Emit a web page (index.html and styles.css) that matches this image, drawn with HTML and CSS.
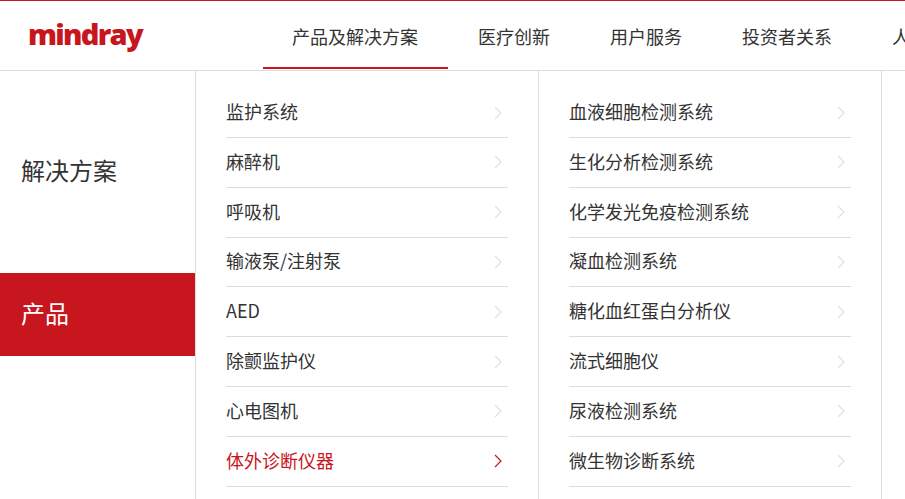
FILE: index.html
```html
<!DOCTYPE html>
<html lang="zh-CN">
<head>
<meta charset="utf-8">
<title>Mindray</title>
<link rel="stylesheet" href="styles.css">
</head>
<body>
<header class="header">
  <a class="logo">mindray</a>
  <nav class="nav">
    <a class="nav-item active">产品及解决方案</a>
    <a class="nav-item">医疗创新</a>
    <a class="nav-item">用户服务</a>
    <a class="nav-item">投资者关系</a>
    <a class="nav-item">人才招聘</a>
  </nav>
</header>
<main class="menu">
  <aside class="side">
    <div class="side-item">解决方案</div>
    <div class="side-item current">产品</div>
  </aside>
  <ul class="col">
    <li class="row"><span>监护系统</span><svg class="chev" viewBox="0 0 8 14"><path d="M1 1l6 6-6 6"/></svg></li>
    <li class="row"><span>麻醉机</span><svg class="chev" viewBox="0 0 8 14"><path d="M1 1l6 6-6 6"/></svg></li>
    <li class="row"><span>呼吸机</span><svg class="chev" viewBox="0 0 8 14"><path d="M1 1l6 6-6 6"/></svg></li>
    <li class="row"><span>输液泵/注射泵</span><svg class="chev" viewBox="0 0 8 14"><path d="M1 1l6 6-6 6"/></svg></li>
    <li class="row"><span>AED</span><svg class="chev" viewBox="0 0 8 14"><path d="M1 1l6 6-6 6"/></svg></li>
    <li class="row"><span>除颤监护仪</span><svg class="chev" viewBox="0 0 8 14"><path d="M1 1l6 6-6 6"/></svg></li>
    <li class="row"><span>心电图机</span><svg class="chev" viewBox="0 0 8 14"><path d="M1 1l6 6-6 6"/></svg></li>
    <li class="row on"><span>体外诊断仪器</span><svg class="chev" viewBox="0 0 8 14"><path d="M1 1l6 6-6 6"/></svg></li>
  </ul>
  <ul class="col">
    <li class="row"><span>血液细胞检测系统</span><svg class="chev" viewBox="0 0 8 14"><path d="M1 1l6 6-6 6"/></svg></li>
    <li class="row"><span>生化分析检测系统</span><svg class="chev" viewBox="0 0 8 14"><path d="M1 1l6 6-6 6"/></svg></li>
    <li class="row"><span>化学发光免疫检测系统</span><svg class="chev" viewBox="0 0 8 14"><path d="M1 1l6 6-6 6"/></svg></li>
    <li class="row"><span>凝血检测系统</span><svg class="chev" viewBox="0 0 8 14"><path d="M1 1l6 6-6 6"/></svg></li>
    <li class="row"><span>糖化血红蛋白分析仪</span><svg class="chev" viewBox="0 0 8 14"><path d="M1 1l6 6-6 6"/></svg></li>
    <li class="row"><span>流式细胞仪</span><svg class="chev" viewBox="0 0 8 14"><path d="M1 1l6 6-6 6"/></svg></li>
    <li class="row"><span>尿液检测系统</span><svg class="chev" viewBox="0 0 8 14"><path d="M1 1l6 6-6 6"/></svg></li>
    <li class="row"><span>微生物诊断系统</span><svg class="chev" viewBox="0 0 8 14"><path d="M1 1l6 6-6 6"/></svg></li>
  </ul>
</main>
</body>
</html>
```
FILE: styles.css
```css
html, body {
  margin: 0;
  padding: 0;
  height: 499px;
  overflow: hidden;
  background: #fff;
  font-family: "Noto Sans CJK SC", "Liberation Sans", sans-serif;
  color: #333;
}
.header {
  display: flex;
  height: 69px;
  border-top: 1px solid #c7161d;
  border-bottom: 1px solid #dcdcdc;
  overflow: hidden;
}
.logo {
  width: 262px;
  flex: none;
  box-sizing: border-box;
  padding: 13px 0 0 28px;
  font-family: "Open Sans", sans-serif;
  font-weight: 800;
  font-size: 29px;
  line-height: 40px;
  letter-spacing: -1.7px;
  color: #c7161d;
}
.nav {
  display: flex;
  flex: none;
}
.nav-item {
  flex: none;
  padding: 0 30px;
  height: 68px;
  box-sizing: border-box;
  font-size: 18px;
  line-height: 70px;
  white-space: nowrap;
}
.nav-item.active {
  margin-left: 1px;
  padding-left: 29px;
  border-bottom: 2px solid #c7161d;
}
.menu {
  display: flex;
  height: 428px;
}
.side {
  width: 195px;
  flex: none;
  border-right: 1px solid #dcdcdc;
  padding-top: 59px;
  display: flex;
  flex-direction: column;
  gap: 60px;
}
.side-item {
  height: 83px;
  padding-left: 21px;
  font-size: 24px;
  line-height: 80px;
}
.side-item.current {
  background: #c7161d;
  color: #fff;
}
.col {
  list-style: none;
  margin: 0;
  padding: 17.2px 30px 0;
  width: 282px;
  flex: none;
  border-right: 1px solid #dcdcdc;
}
.row {
  height: 49.8px;
  box-sizing: border-box;
  border-bottom: 1px solid #dcdcdc;
  display: flex;
  align-items: center;
  justify-content: space-between;
  font-size: 18px;
  line-height: 46px;
  padding-right: 6px;
}
.row span {
  padding-bottom: 3px;
}
.chev {
  width: 8px;
  height: 14px;
  fill: none;
  stroke: #e0e0e0;
  stroke-width: 1.2;
}
.row.on { color: #c7161d; }
.row.on .chev { stroke: #c7161d; }
```
